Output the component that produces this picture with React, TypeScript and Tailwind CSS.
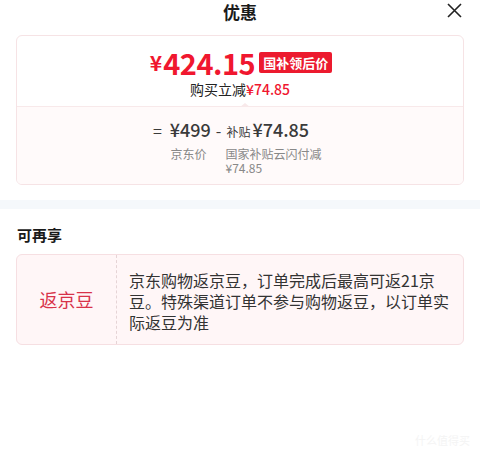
import React from "react";

export default function App() {
  const font = { fontFamily: '"Noto Sans CJK SC", "Noto Sans", sans-serif' };
  return (
    <div style={font} className="w-[480px] h-[457px] bg-white relative overflow-hidden text-[#1a1a1a]">
      <div className="relative h-[24px] flex items-center justify-center">
        <span className="text-[17px] font-bold leading-[24px] text-[#1a1a1a]">优惠</span>
        <svg className="absolute right-[18px] top-[3px]" width="15" height="15" viewBox="0 0 15 15">
          <path d="M1 1 L14 14 M14 1 L1 14" stroke="#222" strokeWidth="1.6" />
        </svg>
      </div>

      <div className="mx-4 mt-[11px] rounded-md border border-[#f6e3e5] overflow-hidden">
        <div className="h-[71px] flex flex-col items-center pt-[10px] relative">
          <div className="flex items-center ml-[2px] h-[33px]">
            <span className="text-[#f0172f] font-bold text-[21px] leading-[33px] mr-[1px]">¥</span>
            <span className="text-[#f0172f] font-bold text-[29px] leading-[33px] tracking-[-0.5px]">424.15</span>
            <span className="ml-[4px] bg-[#ec1a2e] text-white font-bold text-[13px] leading-[21px] px-[4px] rounded-[2px]">国补领后价</span>
          </div>
          <div className="text-[14px] leading-[20px]">
            <span className="text-[#222]">购买立减</span>
            <span className="text-[#f0172f] font-medium">¥74.85</span>
          </div>
          <div className="absolute left-0 right-0 bottom-0 h-px bg-[#f8e9ea]" />
          <div className="absolute left-[223px] bottom-0 w-0 h-0 border-l-[5px] border-r-[5px] border-b-[4px] border-l-transparent border-r-transparent border-b-[#f8e9ea]" />
        </div>
        <div className="h-[77px] bg-[#fffafa] flex flex-col items-center pt-[10px]">
          <div className="flex items-baseline text-[#3a3a3a] leading-[24px] mr-[18px]">
            <span className="text-[16px] mr-[8px]">=</span>
            <span className="text-[18px] font-medium">¥499</span>
            <span className="text-[16px] mx-[5px]">-</span>
            <span className="text-[12px] mr-[2px]">补贴</span>
            <span className="text-[18px] font-medium">¥74.85</span>
          </div>
          <div className="flex text-[12px] leading-[14px] text-[#888] mt-[3px] ml-[12px]">
            <span className="w-[55px]">京东价</span>
            <span className="w-[96px]">国家补贴云闪付减<br />¥74.85</span>
          </div>
        </div>
      </div>

      <div className="mt-[15px] h-[9px] bg-[#f5f8fb]" />

      <div className="px-[17px] pt-[16px] text-[15px] font-bold leading-[20px] text-[#1a1a1a]">可再享</div>

      <div className="mx-4 mt-[9px] h-[91px] rounded-md border border-[#f6dfe2] bg-[#fff6f7] flex">
        <div className="w-[100px] flex items-center justify-center border-r border-dashed border-[#e6d4d6] text-[#d8334a] text-[18px]">
          返京豆
        </div>
        <div className="flex-1 pl-[12px] pt-[15px] text-[16px] leading-[21px] text-[#333] whitespace-nowrap">
          京东购物返京豆，订单完成后最高可返21京<br />
          豆。特殊渠道订单不参与购物返豆，以订单实<br />
          际返豆为准
        </div>
      </div>

      <div className="absolute right-[10px] bottom-[9px] text-[11px] text-[#f4f4f4]">什么值得买</div>
    </div>
  );
}
